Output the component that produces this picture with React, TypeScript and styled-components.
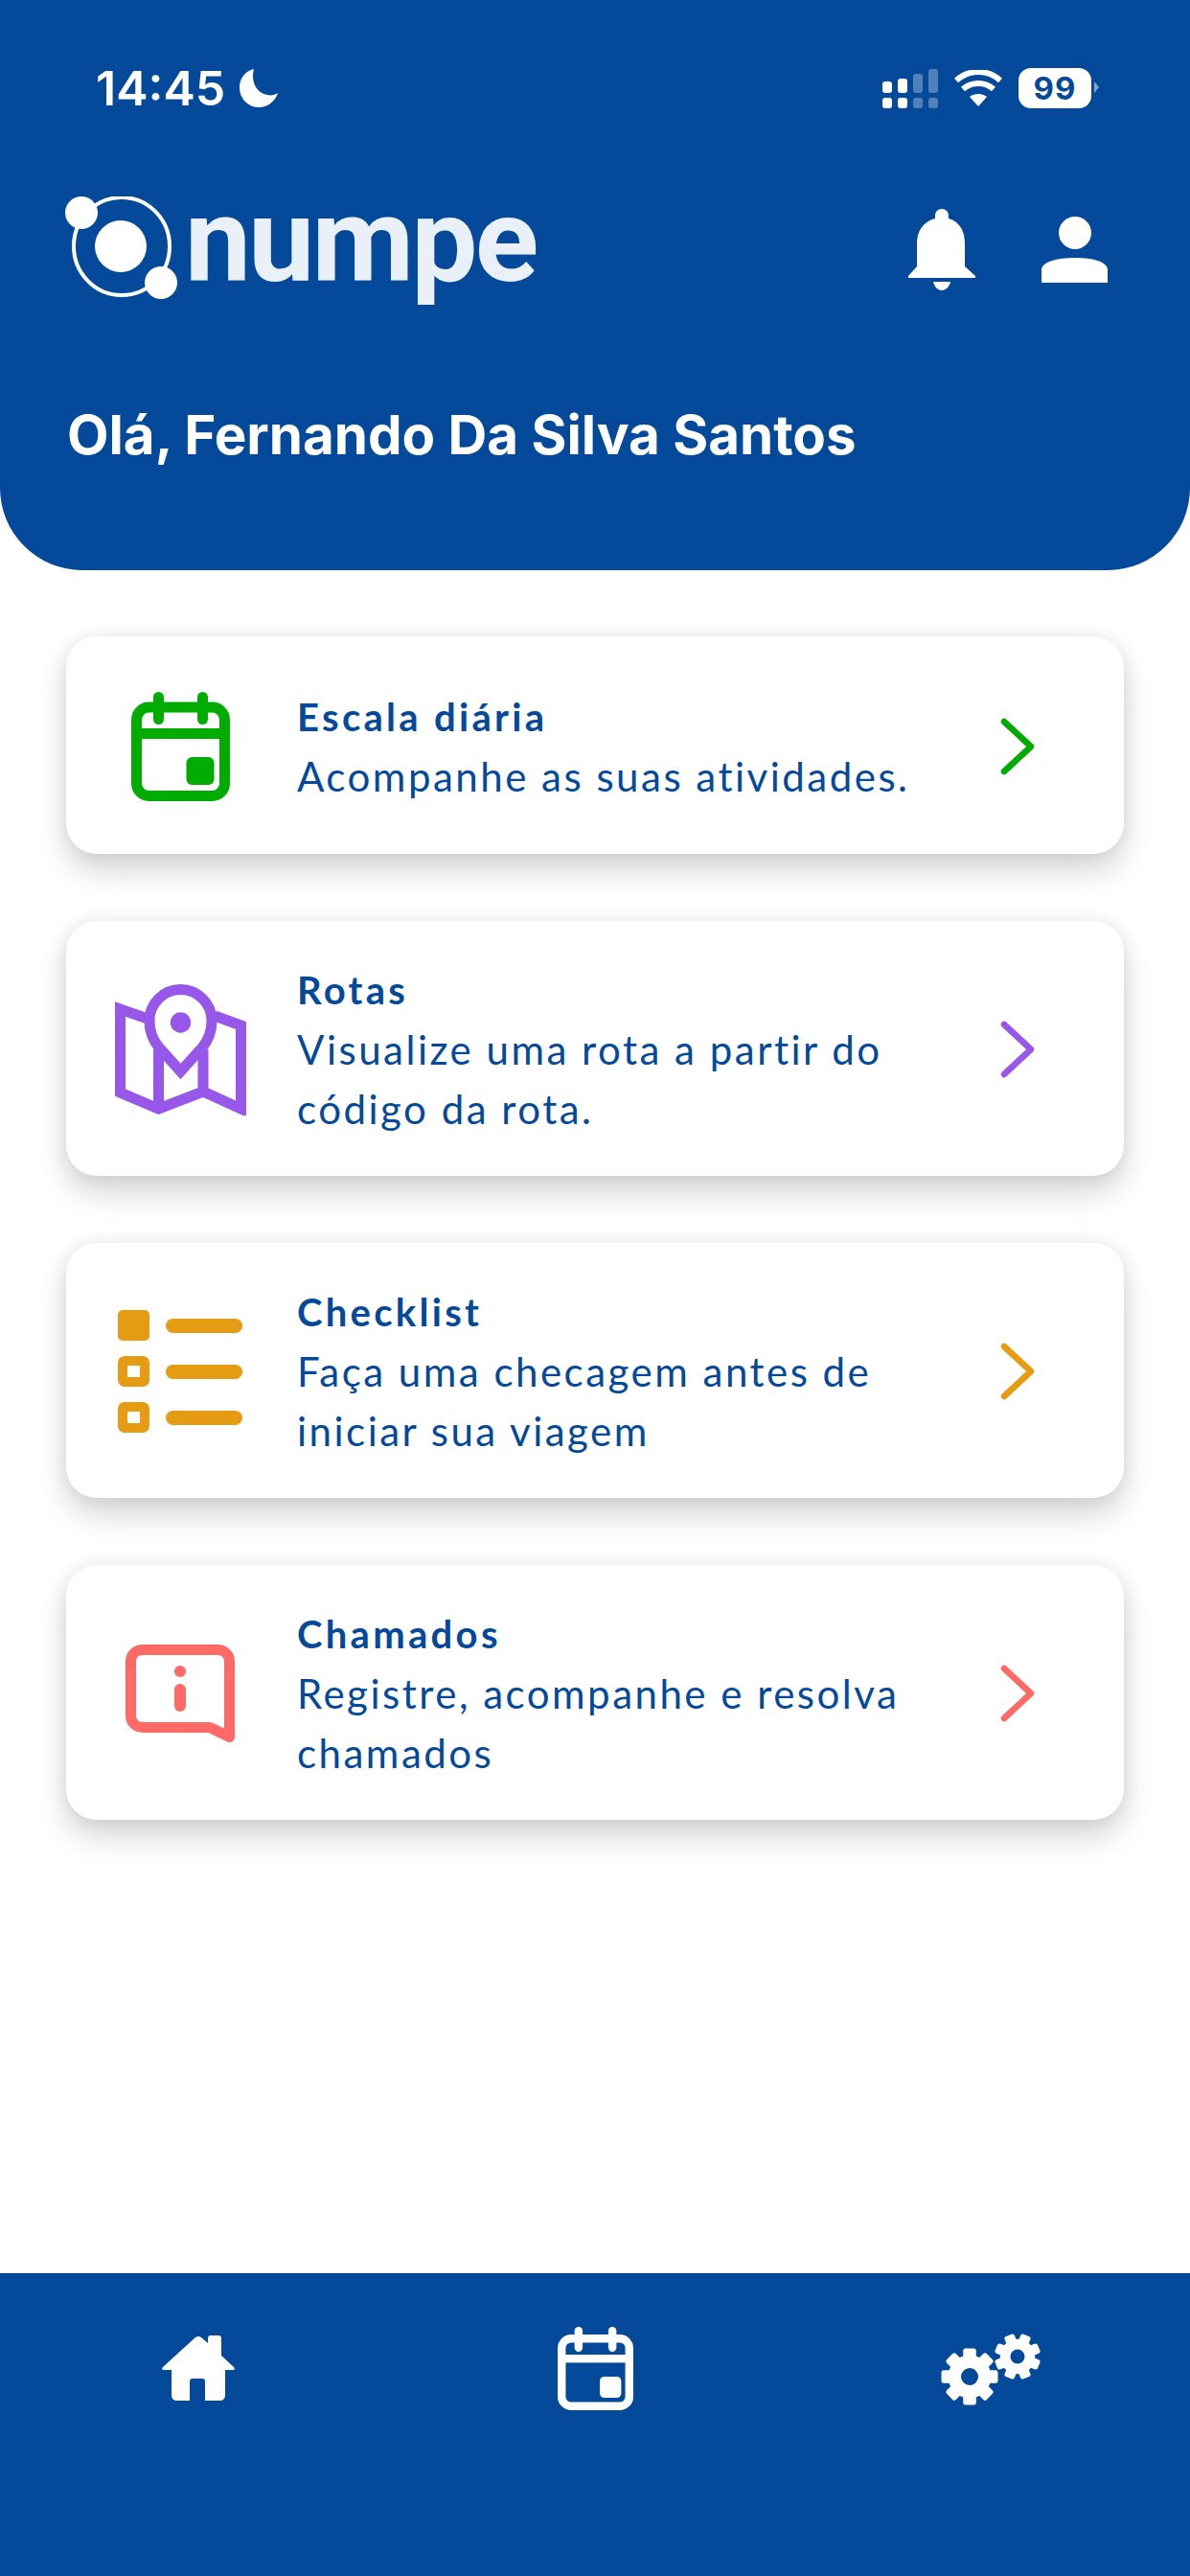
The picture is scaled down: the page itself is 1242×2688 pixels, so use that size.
import React from 'react';
import styled, { createGlobalStyle } from 'styled-components';

const BLUE = '#054a9a';

const GlobalStyle = createGlobalStyle`
  html, body {
    margin: 0;
    padding: 0;
    background: #fff;
  }
`;

const Page = styled.div`
  width: 1242px;
  height: 2688px;
  display: flex;
  flex-direction: column;
  background: #fff;
  overflow: hidden;
`;

const Header = styled.header`
  height: 595px;
  box-sizing: border-box;
  padding-top: 71px;
  background: ${BLUE};
  border-radius: 0 0 86px 86px;
  color: #fff;
`;

const StatusBar = styled.div`
  height: 42px;
  padding: 0 103px 0 100px;
  display: flex;
  justify-content: space-between;
  align-items: center;
`;

const TimeGroup = styled.div`
  display: flex;
  align-items: center;
  gap: 15px;
`;

const Time = styled.span`
  font: 600 50px/42px Inter, sans-serif;
`;

const StatusIcons = styled.div`
  display: flex;
  align-items: center;
  gap: 17px;
`;

const Battery = styled.div`
  width: 76px;
  height: 42px;
  border-radius: 13px;
  background: #fff;
  color: ${BLUE};
  display: flex;
  align-items: center;
  justify-content: center;
  position: relative;
  font: 700 33px/42px Inter, sans-serif;
  letter-spacing: 1px;

  &::after {
    content: '';
    position: absolute;
    left: 79px;
    top: 14px;
    border-left: 5px solid rgba(255, 255, 255, 0.5);
    border-top: 6px solid transparent;
    border-bottom: 6px solid transparent;
  }
`;

const LogoRow = styled.div`
  margin-top: 92px;
  height: 125px;
  padding: 0 86px 0 66px;
  display: flex;
  justify-content: space-between;
  align-items: flex-start;
`;

const Logo = styled.div`
  display: flex;
  align-items: flex-start;
  gap: 4px;
`;

const Wordmark = styled.span`
  color: #eaf0f8;
  font: 700 123px/125px Roboto, sans-serif;
  letter-spacing: -2.7px;
  margin-top: -16px;
`;

const HeaderActions = styled.div`
  margin-top: 13px;
  display: flex;
  align-items: center;
  gap: 69px;
`;

const Greeting = styled.h1`
  margin: 92px 0 0;
  padding-left: 70px;
  font: 700 56.5px/64px Inter, sans-serif;
`;

const Main = styled.main`
  flex: 1;
  padding: 69px 69px 0;
  display: flex;
  flex-direction: column;
  gap: 70px;
`;

const Card = styled.div`
  min-height: 227px;
  box-sizing: border-box;
  padding: 41px 0 39px;
  display: flex;
  align-items: center;
  background: #fff;
  border-radius: 32px;
  box-shadow: 0 18px 32px rgba(0, 0, 0, 0.16), 0 0 20px rgba(0, 0, 0, 0.08);
`;

const IconSlot = styled.div`
  flex: 0 0 238px;
  display: flex;
  justify-content: center;
`;

const CardText = styled.div`
  flex: 1;
  padding-left: 3px;
  color: ${BLUE};
`;

const CardTitle = styled.div`
  font: 700 40px/62px Lato, sans-serif;
  letter-spacing: 3.3px;
`;

const CardBody = styled.div`
  width: 660px;
  font: 400 42px/62px Lato, sans-serif;
  letter-spacing: 2.5px;
`;

const Chevron = styled.svg`
  flex: 0 0 auto;
  margin-right: 92px;
`;

const Footer = styled.footer`
  height: 316px;
  box-sizing: border-box;
  padding-top: 56px;
  display: grid;
  grid-template-columns: repeat(3, 414px);
  align-items: start;
  justify-items: center;
  background: ${BLUE};
  color: #fff;
`;

const NavItem = styled.div`
  height: 87px;
  display: flex;
  align-items: center;
`;

const Moon = () => (
  <svg width="40" height="40" viewBox="0 0 40 40">
    <path d="M15 0C6 2 0 10 0 19c0 12 9 21 20 21 9 0 17-6 20-15-3 2-7 3-11 2C19 26 11 14 15 0z" fill="#fff" />
  </svg>
);

const Signal = () => (
  <svg width="58" height="41" viewBox="0 0 58 41">
    <g fill="#fff">
      <rect x="0" y="13" width="10" height="12" rx="3" />
      <rect x="16" y="10" width="10" height="15" rx="3" />
      <rect x="0" y="30" width="10" height="11" rx="3" />
      <rect x="16" y="30" width="10" height="11" rx="3" />
    </g>
    <g fill="#fff" opacity="0.3">
      <rect x="32" y="5" width="10" height="20" rx="3" />
      <rect x="48" y="0" width="10" height="25" rx="3" />
      <rect x="32" y="30" width="10" height="11" rx="3" />
      <rect x="48" y="30" width="10" height="11" rx="3" />
    </g>
  </svg>
);

const Wifi = () => (
  <svg width="50" height="38" viewBox="0 0 50 38">
    <path d="M25 38l-9-10c5-4 13-4 18 0z" fill="#fff" />
    <path d="M9 20c9-8 23-8 32 0" fill="none" stroke="#fff" strokeWidth="6" />
    <path d="M2 11C15-1 35-1 48 11" fill="none" stroke="#fff" strokeWidth="6" />
  </svg>
);

const OrbitMark = () => (
  <svg width="123" height="110" viewBox="0 0 123 110">
    <ellipse cx="61" cy="52" rx="50" ry="51" fill="none" stroke="#fff" strokeWidth="4" />
    <circle cx="60" cy="52" r="27" fill="#fff" />
    <circle cx="19" cy="17" r="17" fill="#fff" />
    <circle cx="102" cy="90" r="17" fill="#fff" />
  </svg>
);

const Bell = () => (
  <svg width="70" height="85" viewBox="0 0 70 85">
    <path
      d="M35 0c4 0 7 3 7 7v3c12 3 17 14 17 26v24l11 10v2H0v-2l9-10V36C9 24 15 13 28 10V7c0-4 3-7 7-7zM26 76h18c-1 5-5 9-9 9s-8-4-9-9z"
      fill="#fff"
    />
  </svg>
);

const Person = () => (
  <svg width="69" height="69" viewBox="0 0 69 69">
    <circle cx="35" cy="17" r="17" fill="#fff" />
    <path d="M0 69V56c0-9 16-13 35-13s34 4 34 13v13z" fill="#fff" />
  </svg>
);

const Home = () => (
  <svg width="76" height="69" viewBox="0 0 76 69">
    <path
      d="M35 2q3-2 6 0L48 8V3q0-3 3-3h8q3 0 3 3V21L75 33q2 3-1 3H66V62q0 6-6 6H45V48q0-3-3-3H32q-3 0-3 3V68H16q-6 0-6-6V36H2q-3 0-1-3z"
      fill="#fff"
    />
  </svg>
);

const GEAR_TEETH = [0, 45, 90, 135, 180, 225, 270, 315];

const Gear = ({ cx, cy, r, hole, turn }: { cx: number; cy: number; r: number; hole: number; turn: number }) => (
  <g transform={`translate(${cx} ${cy})`}>
    <circle r={r * 0.76} fill="#fff" />
    {GEAR_TEETH.map((a) => (
      <rect
        key={a}
        x={-r * 0.23}
        y={-r}
        width={r * 0.46}
        height={r * 0.5}
        rx={2.5}
        fill="#fff"
        transform={`rotate(${a + turn})`}
      />
    ))}
    <circle r={hole} fill={BLUE} />
  </g>
);

const Gears = () => (
  <svg width="106" height="76" viewBox="0 0 106 76">
    <Gear cx={30} cy={46} r={29.5} hole={9} turn={0} />
    <Gear cx={80} cy={25} r={24} hole={7.5} turn={22.5} />
  </svg>
);

const CalendarGlyph = ({ color, width, height }: { color: string; width: number; height: number }) => (
  <svg width={width} height={height} viewBox="0 0 103 114" preserveAspectRatio="none">
    <rect x="5.5" y="16" width="92" height="92.5" rx="13" fill="none" stroke={color} strokeWidth="11" />
    <rect x="5" y="38" width="93" height="11" fill={color} />
    <rect x="23" y="0" width="11" height="34" rx="5.5" fill={color} />
    <rect x="69" y="0" width="11" height="34" rx="5.5" fill={color} />
    <rect x="57.5" y="68" width="29" height="29" rx="6" fill={color} />
  </svg>
);

const MapGlyph = ({ color }: { color: string }) => (
  <svg width="137" height="137" viewBox="0 0 137 137">
    <path
      d="M34 36L5.5 26v87L45.5 130 92 112l39.500 18V43L104 33M45.500 68v62M92 68v44"
      fill="none"
      stroke={color}
      strokeWidth="11"
    />
    <path
      d="M68.500 91L46 66C39 58 36 48 36 38a32.500 32.500 0 0 1 65 0C101 48 98 58 91 66z"
      fill="#fff"
      stroke={color}
      strokeWidth="11"
    />
    <circle cx="68.500" cy="40" r="10.700" fill={color} />
  </svg>
);

const ChecklistGlyph = ({ color }: { color: string }) => (
  <svg width="130" height="128" viewBox="0 0 130 128">
    <rect x="0" y="0" width="33" height="32" rx="5" fill={color} />
    <rect x="5" y="53" width="23" height="22" rx="2" fill="none" stroke={color} strokeWidth="10" />
    <rect x="5" y="101" width="23" height="22" rx="2" fill="none" stroke={color} strokeWidth="10" />
    <rect x="50" y="9" width="80" height="15" rx="7.500" fill={color} />
    <rect x="50" y="57" width="80" height="15" rx="7.500" fill={color} />
    <rect x="50" y="105" width="80" height="15" rx="7.500" fill={color} />
  </svg>
);

const ChatGlyph = ({ color }: { color: string }) => (
  <svg width="114" height="102" viewBox="0 0 114 102">
    <path
      d="M18 5.500h78c7 0 12.500 5 12.500 12v79L88 86.500H18c-7 0-12.500-5-12.500-12v-57c0-7 5.500-12 12.500-12z"
      fill="none"
      stroke={color}
      strokeWidth="11"
      strokeLinejoin="round"
    />
    <circle cx="57" cy="28" r="6" fill={color} />
    <rect x="51" y="41" width="12" height="29" rx="6" fill={color} />
  </svg>
);

const items = [
  {
    title: 'Escala diária',
    body: 'Acompanhe as suas atividades.',
    color: '#00ac00',
    icon: <CalendarGlyph color="#00ac00" width={103} height={114} />,
  },
  {
    title: 'Rotas',
    body: 'Visualize uma rota a partir do código da rota.',
    color: '#9757e8',
    icon: <MapGlyph color="#9757e8" />,
  },
  {
    title: 'Checklist',
    body: 'Faça uma checagem antes de iniciar sua viagem',
    color: '#e59c12',
    icon: <ChecklistGlyph color="#e59c12" />,
  },
  {
    title: 'Chamados',
    body: 'Registre, acompanhe e resolva chamados',
    color: '#ff6966',
    icon: <ChatGlyph color="#ff6966" />,
  },
];

export default function App() {
  return (
    <Page>
      <GlobalStyle />
      <Header>
        <StatusBar>
          <TimeGroup>
            <Time>14:45</Time>
            <Moon />
          </TimeGroup>
          <StatusIcons>
            <Signal />
            <Wifi />
            <Battery>99</Battery>
          </StatusIcons>
        </StatusBar>
        <LogoRow>
          <Logo>
            <OrbitMark />
            <Wordmark>numpe</Wordmark>
          </Logo>
          <HeaderActions>
            <Bell />
            <Person />
          </HeaderActions>
        </LogoRow>
        <Greeting>Olá, Fernando Da Silva Santos</Greeting>
      </Header>
      <Main>
        {items.map((item) => (
          <Card key={item.title}>
            <IconSlot>{item.icon}</IconSlot>
            <CardText>
              <CardTitle>{item.title}</CardTitle>
              <CardBody>{item.body}</CardBody>
            </CardText>
            <Chevron width="37" height="60" viewBox="0 0 37 60">
              <path
                d="M4 4l28 26L4 56"
                fill="none"
                stroke={item.color}
                strokeWidth="6.5"
                strokeLinecap="round"
                strokeLinejoin="round"
              />
            </Chevron>
          </Card>
        ))}
      </Main>
      <Footer>
        <NavItem><Home /></NavItem>
        <NavItem><CalendarGlyph color="#fff" width={79} height={87} /></NavItem>
        <NavItem><Gears /></NavItem>
      </Footer>
    </Page>
  );
}
